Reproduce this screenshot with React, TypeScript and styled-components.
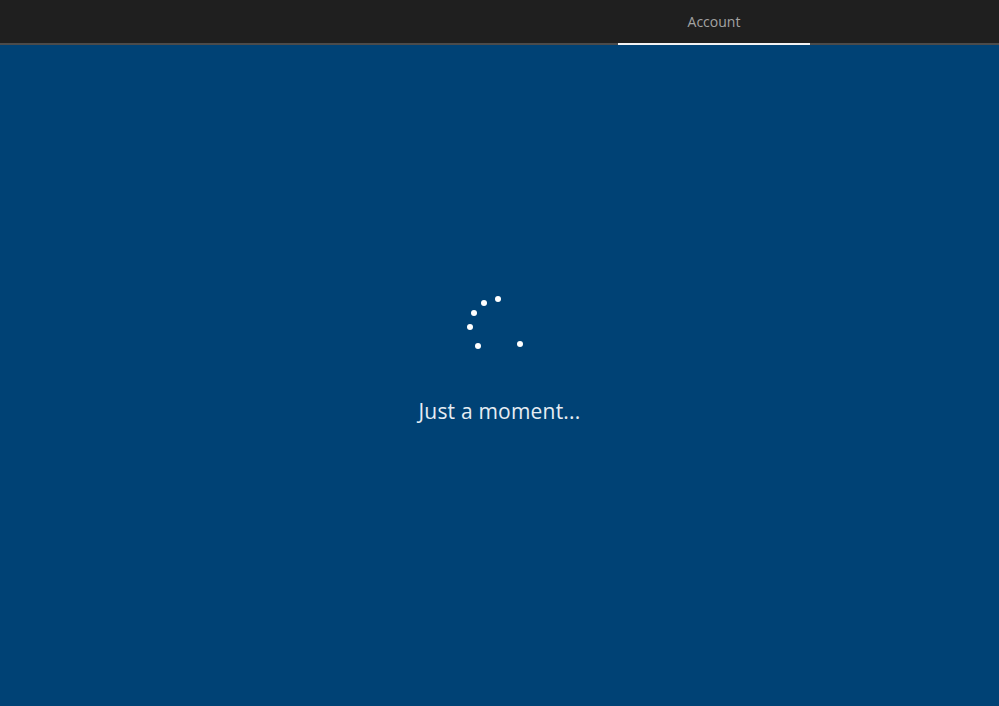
import { FC } from 'react';
import styled, { createGlobalStyle } from 'styled-components';

const GlobalStyle = createGlobalStyle`
  html, body, #root {
    margin: 0;
    height: 100%;
  }
  body {
    background: #004275;
    font-family: 'Open Sans', 'Noto Sans', 'Liberation Sans', sans-serif;
  }
`;

const Page = styled.div`
  height: 100%;
  display: flex;
  flex-direction: column;
`;

const Header = styled.header`
  height: 43px;
  flex-shrink: 0;
  display: flex;
  justify-content: flex-end;
  padding-right: 189px;
  background: #1f1f1f;
  border-bottom: 2px solid #4b4b4b;
`;

const Tab = styled.div<{ $active?: boolean }>`
  width: 192px;
  height: 45px;
  display: flex;
  align-items: center;
  justify-content: center;
  padding-bottom: 1px;
  box-sizing: border-box;
  margin-bottom: -2px;
  border-bottom: 2px solid ${({ $active }) => ($active ? '#f2f2f2' : 'transparent')};
  color: #a3a3a3;
  font-size: 14px;
`;

const Main = styled.main`
  flex: 1;
  display: flex;
  flex-direction: column;
  align-items: center;
  padding-top: 251px;
  background: #004275;
`;

const Spinner = styled.div`
  position: relative;
  width: 62px;
  height: 62px;
  margin-left: -3px;
`;

const Dot = styled.span`
  position: absolute;
  width: 6px;
  height: 6px;
  margin: -3px 0 0 -3px;
  border-radius: 50%;
  background: #ffffff;
`;

const Message = styled.p`
  margin: 39px 0 0;
  color: #e6edf3;
  font-size: 21px;
  line-height: 28px;
  letter-spacing: 0.2px;
`;

const dotAngles = [-90, -120, -150, 180, 136, 38];

const App: FC = () => {
  return (
    <>
      <GlobalStyle />
      <Page>
        <Header>
          <Tab $active>Account</Tab>
        </Header>
        <Main>
          <Spinner>
            {dotAngles.map((a) => {
              const rad = (a * Math.PI) / 180;
              return (
                <Dot
                  key={a}
                  style={{ left: 31 + 28 * Math.cos(rad), top: 31 + 28 * Math.sin(rad) }}
                />
              );
            })}
          </Spinner>
          <Message>Just a moment...</Message>
        </Main>
      </Page>
    </>
  );
};

export default App;
